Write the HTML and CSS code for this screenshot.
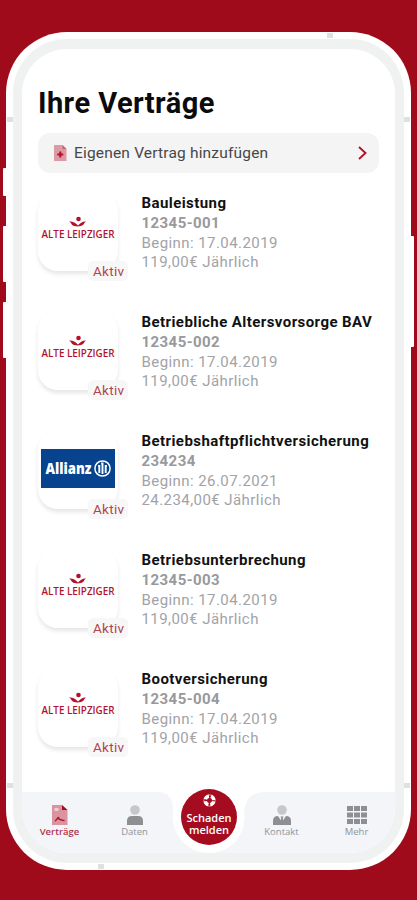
FILE: index.html
```html
<!DOCTYPE html>
<html lang="de">
<head>
    <meta charset="utf-8">
    <title>Ihre Verträge</title>
    <link rel="stylesheet" href="styles.css">
</head>
<body>
    <div class="phone">
        <span class="key key-mute"></span>
        <span class="key key-up"></span>
        <span class="key key-down"></span>
        <span class="key key-power"></span>
        <span class="antenna antenna-top"></span>
        <span class="antenna antenna-left"></span>
        <span class="antenna antenna-right"></span>
        <span class="antenna antenna-left low"></span>
        <span class="antenna antenna-right low"></span>
        <span class="antenna antenna-bottom"></span>

        <div class="bezel">
            <div class="screen">
                <main class="content">
                    <h1>Ihre Verträge</h1>

                    <div class="add">
                        <svg class="add-icon" width="13" height="16" viewBox="0 0 13 16">
                            <path d="M0 0h8.500L12.500 4v12H0z" fill="#dc9aa5"/>
                            <path d="M8.500 0v4h4z" fill="#cc6075"/>
                            <path d="M6.300 6.500v6M3.300 9.500h6" stroke="#b3122c" stroke-width="2"/>
                        </svg>
                        <span class="add-label">Eigenen Vertrag hinzufügen</span>
                        <svg class="chevron" width="9" height="14" viewBox="0 0 9 14">
                            <path d="M1 1l6.500 6L1 13" fill="none" stroke="#b3122c" stroke-width="1.900"/>
                        </svg>
                    </div>

                    <div class="contract">
                        <div class="tile">
                            <svg class="logo" width="78" height="32" viewBox="0 0 78 32">
                                <path id="leaf" d="M30 6.500c4-.3 6 1 9 4 3-3 5-4.300 8-4-2 1-1.500 3.500-5 4.500-2.500.6-4.500.6-7 0-3-1-2.500-3.500-5-4.500z" fill="#b3122c"/>
                                <circle cx="39.500" cy="4" r="2.300" fill="#b3122c"/>
                                <text x="2.500" y="22.500" textLength="73" lengthAdjust="spacingAndGlyphs" class="al-text">ALTE LEIPZIGER</text>
                            </svg>
                            <span class="status">Aktiv</span>
                        </div>
                        <div class="info">
                            <div class="name">Bauleistung</div>
                            <div class="number">12345-001</div>
                            <div>Beginn: 17.04.2019</div>
                            <div>119,00€ Jährlich</div>
                        </div>
                    </div>
                    <div class="contract">
                        <div class="tile">
                            <svg class="logo" width="78" height="32" viewBox="0 0 78 32">
                                <use href="#leaf"/>
                                <circle cx="39.500" cy="4" r="2.300" fill="#b3122c"/>
                                <text x="2.500" y="22.500" textLength="73" lengthAdjust="spacingAndGlyphs" class="al-text">ALTE LEIPZIGER</text>
                            </svg>
                            <span class="status">Aktiv</span>
                        </div>
                        <div class="info">
                            <div class="name">Betriebliche Altersvorsorge BAV</div>
                            <div class="number">12345-002</div>
                            <div>Beginn: 17.04.2019</div>
                            <div>119,00€ Jährlich</div>
                        </div>
                    </div>
                    <div class="contract">
                        <div class="tile">
                            <svg class="logo allianz" width="74" height="39" viewBox="0 0 74 39">
                                <rect width="74" height="39" fill="#07438f"/>
                                <text x="4.500" y="24.500" textLength="46" lengthAdjust="spacingAndGlyphs" class="allianz-text">Allianz</text>
                                <circle cx="61.500" cy="19.500" r="7.600" fill="none" stroke="#fff" stroke-width="1.500"/>
                                <path d="M58.300 24v-7h-1.200M61.500 25V14.500h-1.300M64.700 24v-7h1.200" fill="none" stroke="#fff" stroke-width="1.900"/>
                            </svg>
                            <span class="status">Aktiv</span>
                        </div>
                        <div class="info">
                            <div class="name">Betriebshaftpflichtversicherung</div>
                            <div class="number">234234</div>
                            <div>Beginn: 26.07.2021</div>
                            <div>24.234,00€ Jährlich</div>
                        </div>
                    </div>
                    <div class="contract">
                        <div class="tile">
                            <svg class="logo" width="78" height="32" viewBox="0 0 78 32">
                                <use href="#leaf"/>
                                <circle cx="39.500" cy="4" r="2.300" fill="#b3122c"/>
                                <text x="2.500" y="22.500" textLength="73" lengthAdjust="spacingAndGlyphs" class="al-text">ALTE LEIPZIGER</text>
                            </svg>
                            <span class="status">Aktiv</span>
                        </div>
                        <div class="info">
                            <div class="name">Betriebsunterbrechung</div>
                            <div class="number">12345-003</div>
                            <div>Beginn: 17.04.2019</div>
                            <div>119,00€ Jährlich</div>
                        </div>
                    </div>
                    <div class="contract">
                        <div class="tile">
                            <svg class="logo" width="78" height="32" viewBox="0 0 78 32">
                                <use href="#leaf"/>
                                <circle cx="39.500" cy="4" r="2.300" fill="#b3122c"/>
                                <text x="2.500" y="22.500" textLength="73" lengthAdjust="spacingAndGlyphs" class="al-text">ALTE LEIPZIGER</text>
                            </svg>
                            <span class="status">Aktiv</span>
                        </div>
                        <div class="info">
                            <div class="name">Bootversicherung</div>
                            <div class="number">12345-004</div>
                            <div>Beginn: 17.04.2019</div>
                            <div>119,00€ Jährlich</div>
                        </div>
                    </div>
                </main>

                <nav class="tabbar">
                    <!-- bar with the notch for the round button -->
                    <svg class="tabbar-bg" width="374" height="61" viewBox="0 0 374 61">
                        <path d="M0 0H136Q149 0 151 14C152 20 150 22 151 28C153 48 169 61 187 61H0zM374 0H243Q226 0 223 15C221 22 224 24 222 31C219 49 205 61 187 61H374z" fill="#f3f5f9"/>
                    </svg>
                    <div class="tab active">
                        <svg width="16" height="20" viewBox="0 0 16 20">
                            <path d="M0 0h10l5.500 5v15H0z" fill="#d994a0"/>
                            <path d="M10 0v5h5.500z" fill="#a90d26"/>
                            <path d="M2.500 3h4v3h-4z" fill="#eccbd1"/>
                            <path d="M3 16c2-1 3-4 3.500-3.500s0 2 1.500 2 1.500 1 4.500 1" fill="none" stroke="#a90d26" stroke-width="1.300"/>
                        </svg>
                        <span>Verträge</span>
                    </div>
                    <div class="tab">
                        <svg width="18" height="20" viewBox="0 0 18 20">
                            <circle cx="9" cy="5" r="4.800" fill="#c6c7c9"/>
                            <path d="M1 20v-4q0-5 5-5h6q5 0 5 5v4z" fill="#8e8f92"/>
                        </svg>
                        <span>Daten</span>
                    </div>
                    <div class="report">
                        <svg width="13" height="13" viewBox="0 0 13 13">
                            <circle cx="6.500" cy="6.500" r="4.300" fill="none" stroke="#fff" stroke-width="3.400" stroke-dasharray="4.700 2.050" stroke-dashoffset="-1"/>
                            <circle cx="6.500" cy="6.500" r="5.600" fill="none" stroke="#fff" stroke-width=".6"/>
                        </svg>
                        <div class="report-label">Schaden</div>
                        <div class="report-label">melden</div>
                    </div>
                    <div class="tab">
                        <svg width="18" height="20" viewBox="0 0 18 20">
                            <circle cx="9" cy="5" r="4.800" fill="#c6c7c9"/>
                            <path d="M0 20v-4q0-5 5-5l4 6 4-6q5 0 5 5v4z" fill="#8e8f92"/>
                            <path d="M7.500 11.500h3l-.7 2 1 4.500L9 19.500 7.200 18l1-4.500z" fill="#8e8f92"/>
                        </svg>
                        <span>Kontakt</span>
                    </div>
                    <div class="tab">
                        <svg width="20" height="20" viewBox="0 0 20 20">
                            <path d="M0 1h6v5H0zM7 1h6v5H7zM14 1h6v5h-6zM0 7.500h6v5H0zM7 7.500h6v5H7zM14 7.500h6v5h-6zM0 14h6v5H0zM7 14h6v5H7zM14 14h6v5h-6z" fill="#8e8f92"/>
                        </svg>
                        <span>Mehr</span>
                    </div>
                </nav>
            </div>
        </div>
    </div>
</body>
</html>
```
FILE: styles.css
```css
* {
    box-sizing: border-box;
}
body {
    margin: 0;
    height: 900px;
    padding: 32px 6px 0;
    background-color: #9f0b1b;
    font-family: Roboto, "Liberation Sans", sans-serif;
    overflow: hidden;
}
.phone {
    position: relative;
    width: 405px;
    height: 837.5px;
    padding: 6.5px 7px;
    background-color: #fff;
    border-radius: 61px;
}
.bezel {
    height: 100%;
    padding: 10.5px 9.5px 10px 9px;
    background-color: #f0f2f2;
    border-radius: 54px;
}
.screen {
    display: flex;
    flex-direction: column;
    height: 100%;
    background-color: #fff;
    border-radius: 45px;
    overflow: hidden;
}

/* hardware keys and antenna lines */
.key {
    position: absolute;
    left: -3px;
    width: 4px;
    background-color: #fff;
    border-radius: 1px;
}
.key-mute {
    top: 136px;
    height: 28px;
}
.key-up {
    top: 194px;
    height: 56px;
}
.key-down {
    top: 270px;
    height: 56px;
}
.key-power {
    left: auto;
    right: -3px;
    top: 204px;
    height: 111px;
}
.antenna {
    position: absolute;
    width: 6px;
    height: 5px;
    background-color: #dfe1e1;
}
.antenna-top {
    top: 1px;
    left: 321px;
}
.antenna-left {
    top: 85px;
    left: 1px;
}
.antenna-right {
    top: 85px;
    right: 1px;
}
.antenna.low {
    top: 751px;
}
.antenna-bottom {
    bottom: 1px;
    left: 92px;
}

.content {
    flex: 1;
    padding: 36px 16px 0 16px;
}
h1 {
    margin: 0 0 12px;
    font-size: 29px;
    line-height: 36px;
    font-weight: 700;
    letter-spacing: 0.45px;
    color: #0b0b0b;
}
.add {
    display: flex;
    align-items: center;
    height: 40px;
    margin-bottom: 19px;
    padding: 0 12px 0 16px;
    background-color: #f4f4f4;
    border-radius: 12px;
}
.add-label {
    flex: 1;
    margin-left: 7px;
    font-size: 15.5px;
    letter-spacing: 0.18px;
    color: #47474a;
}
.contract {
    display: flex;
    gap: 23.5px;
    height: 119px;
}
.tile {
    position: relative;
    width: 80px;
    height: 79px;
    padding-top: 23px;
    border-radius: 20px;
    box-shadow: 0 3px 4px rgba(0, 0, 0, 0.1);
}
.logo {
    display: block;
    margin: 0 auto;
}
.logo.allianz {
    margin-top: -4px;
}
.al-text {
    font: 600 10.5px "Open Sans", sans-serif;
    fill: #b3122c;
}
.allianz-text {
    font: 800 15px "Open Sans", sans-serif;
    fill: #fff;
}
.status {
    position: absolute;
    right: -10px;
    bottom: -10px;
    width: 40px;
    height: 20px;
    padding-left: 5px;
    line-height: 20px;
    font-size: 13.5px;
    letter-spacing: 0.3px;
    color: #b04450;
    background-color: #f7f7f7;
    border-radius: 5px;
}
.info {
    padding-top: 2px;
    line-height: 19.8px;
    font-size: 15px;
    letter-spacing: 0.43px;
    color: #a2a3a7;
    white-space: nowrap;
}
.name {
    font-weight: 700;
    color: #111;
}
.number {
    font-weight: 700;
    color: #98999d;
}

.tabbar {
    position: relative;
    display: flex;
    height: 61px;
}
.tabbar-bg {
    position: absolute;
    left: 0;
    top: 0;
}
.tab {
    position: relative;
    width: 75px;
    padding-top: 13px;
    display: flex;
    flex-direction: column;
    align-items: center;
    gap: 1px;
    font: 9.5px/12px "Open Sans", sans-serif;
    color: #929396;
}
.active {
    font-weight: 600;
    color: #b03345;
}
.report {
    position: relative;
    flex: none;
    width: 56px;
    height: 56px;
    margin: -3px 7px 0 9px;
    padding-top: 5px;
    display: flex;
    flex-direction: column;
    align-items: center;
    color: #fff;
    background-color: #a50c20;
    border-radius: 50%;
}
.report svg {
    margin-bottom: 5px;
}
.report-label {
    font: 600 11px/12px "Open Sans", sans-serif;
}
```
